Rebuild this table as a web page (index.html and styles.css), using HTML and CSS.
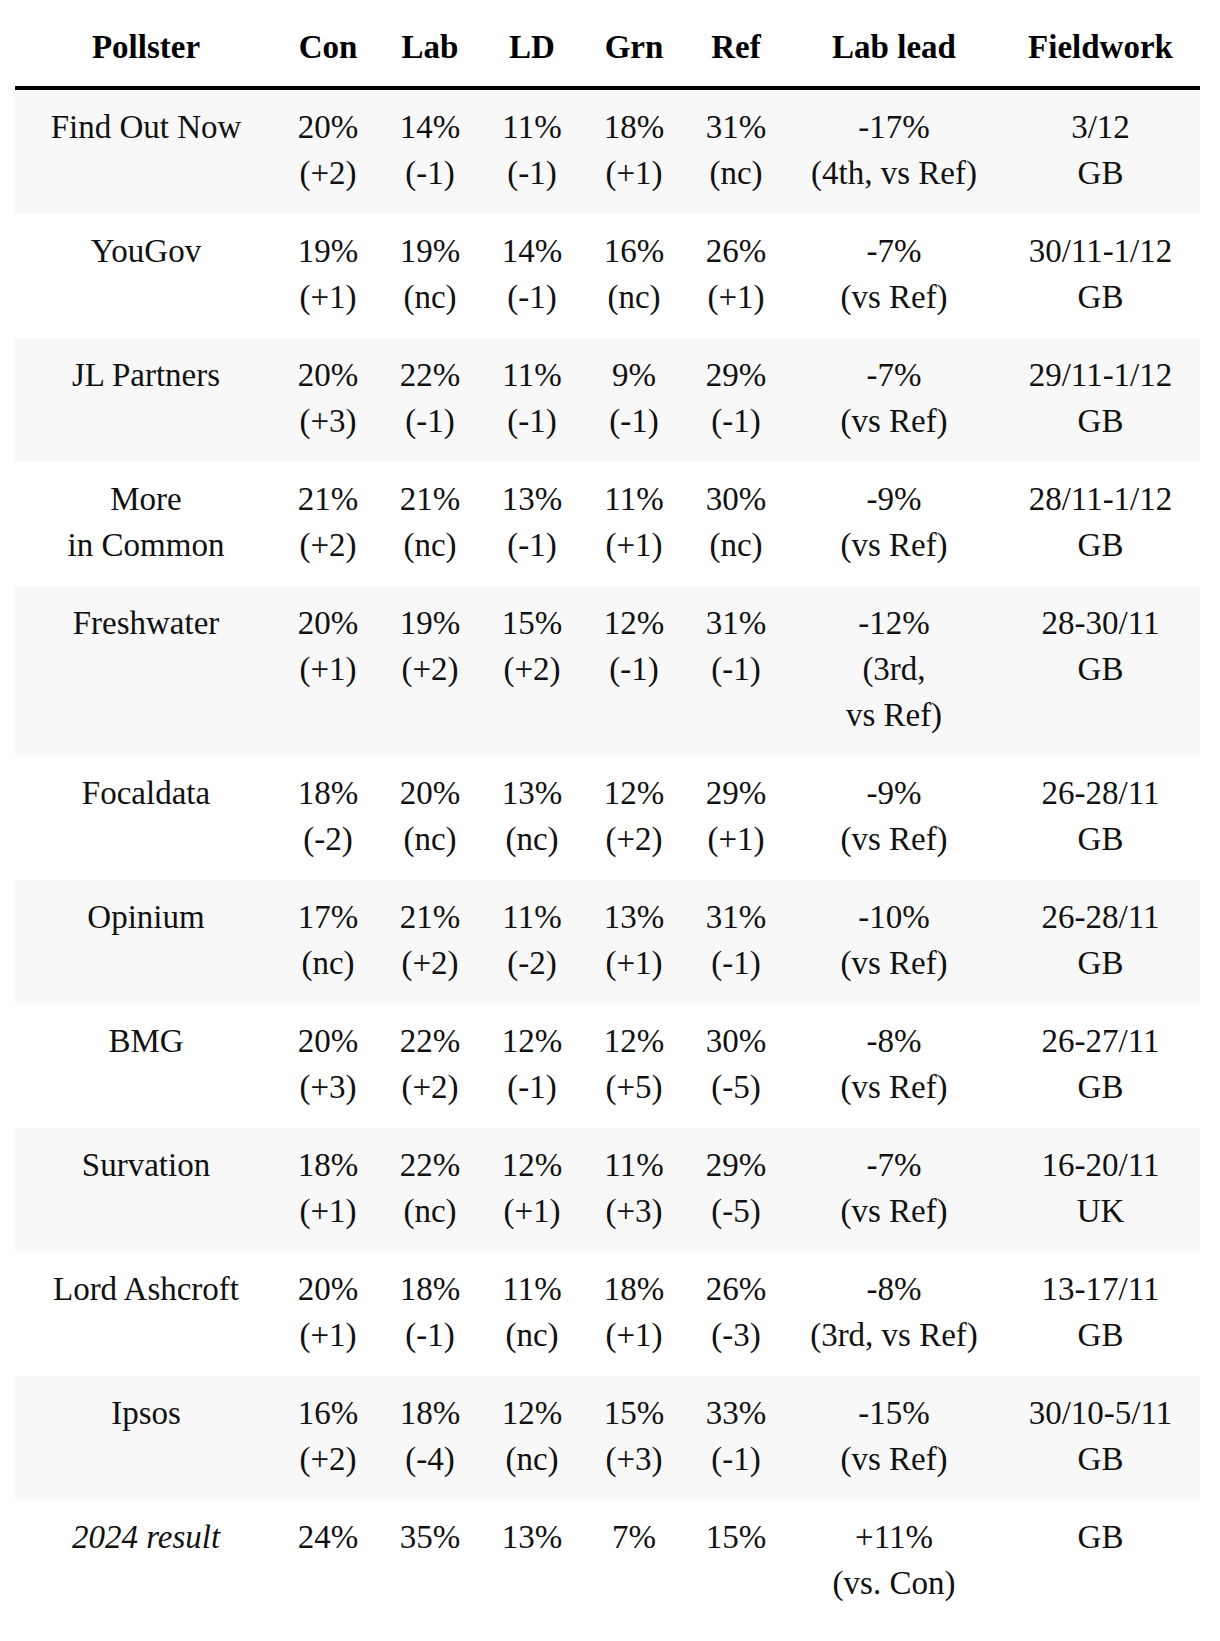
FILE: index.html
```html
<!DOCTYPE html>
<html lang="en">
<head>
<meta charset="utf-8">
<title>Polls</title>
<link rel="stylesheet" href="styles.css">
</head>
<body>
<div class="wrap">
<table class="polls">
<colgroup>
<col class="c-poll"><col class="c-num"><col class="c-num"><col class="c-num"><col class="c-num"><col class="c-num"><col class="c-lead"><col class="c-field">
</colgroup>
<thead>
<tr><th>Pollster</th><th>Con</th><th>Lab</th><th>LD</th><th>Grn</th><th>Ref</th><th>Lab lead</th><th>Fieldwork</th></tr>
</thead>
<tbody>
<tr><td>Find Out Now</td><td>20%<br>(+2)</td><td>14%<br>(-1)</td><td>11%<br>(-1)</td><td>18%<br>(+1)</td><td>31%<br>(nc)</td><td>-17%<br>(4th, vs Ref)</td><td>3/12<br>GB</td></tr>
<tr><td>YouGov</td><td>19%<br>(+1)</td><td>19%<br>(nc)</td><td>14%<br>(-1)</td><td>16%<br>(nc)</td><td>26%<br>(+1)</td><td>-7%<br>(vs Ref)</td><td>30/11-1/12<br>GB</td></tr>
<tr><td>JL Partners</td><td>20%<br>(+3)</td><td>22%<br>(-1)</td><td>11%<br>(-1)</td><td>9%<br>(-1)</td><td>29%<br>(-1)</td><td>-7%<br>(vs Ref)</td><td>29/11-1/12<br>GB</td></tr>
<tr><td>More<br>in Common</td><td>21%<br>(+2)</td><td>21%<br>(nc)</td><td>13%<br>(-1)</td><td>11%<br>(+1)</td><td>30%<br>(nc)</td><td>-9%<br>(vs Ref)</td><td>28/11-1/12<br>GB</td></tr>
<tr><td>Freshwater</td><td>20%<br>(+1)</td><td>19%<br>(+2)</td><td>15%<br>(+2)</td><td>12%<br>(-1)</td><td>31%<br>(-1)</td><td>-12%<br>(3rd,<br>vs Ref)</td><td>28-30/11<br>GB</td></tr>
<tr><td>Focaldata</td><td>18%<br>(-2)</td><td>20%<br>(nc)</td><td>13%<br>(nc)</td><td>12%<br>(+2)</td><td>29%<br>(+1)</td><td>-9%<br>(vs Ref)</td><td>26-28/11<br>GB</td></tr>
<tr><td>Opinium</td><td>17%<br>(nc)</td><td>21%<br>(+2)</td><td>11%<br>(-2)</td><td>13%<br>(+1)</td><td>31%<br>(-1)</td><td>-10%<br>(vs Ref)</td><td>26-28/11<br>GB</td></tr>
<tr><td>BMG</td><td>20%<br>(+3)</td><td>22%<br>(+2)</td><td>12%<br>(-1)</td><td>12%<br>(+5)</td><td>30%<br>(-5)</td><td>-8%<br>(vs Ref)</td><td>26-27/11<br>GB</td></tr>
<tr><td>Survation</td><td>18%<br>(+1)</td><td>22%<br>(nc)</td><td>12%<br>(+1)</td><td>11%<br>(+3)</td><td>29%<br>(-5)</td><td>-7%<br>(vs Ref)</td><td>16-20/11<br>UK</td></tr>
<tr><td>Lord Ashcroft</td><td>20%<br>(+1)</td><td>18%<br>(-1)</td><td>11%<br>(nc)</td><td>18%<br>(+1)</td><td>26%<br>(-3)</td><td>-8%<br>(3rd, vs Ref)</td><td>13-17/11<br>GB</td></tr>
<tr><td>Ipsos</td><td>16%<br>(+2)</td><td>18%<br>(-4)</td><td>12%<br>(nc)</td><td>15%<br>(+3)</td><td>33%<br>(-1)</td><td>-15%<br>(vs Ref)</td><td>30/10-5/11<br>GB</td></tr>
<tr class="result"><td><em>2024 result</em></td><td>24%</td><td>35%</td><td>13%</td><td>7%</td><td>15%</td><td>+11%<br>(vs. Con)</td><td>GB</td></tr>
</tbody>
</table>
</div>
</body>
</html>
```

FILE: styles.css
```css
html, body {
  margin: 0;
  padding: 0;
  background: #ffffff;
}

.wrap {
  padding: 8px 0 0 15px;
}

.polls {
  width: 1185px;
  border-collapse: collapse;
  table-layout: fixed;
  font-family: "Liberation Serif", "Times New Roman", serif;
  font-size: 33px;
  line-height: 46px;
  color: #111111;
}

.c-poll { width: 262px; }
.c-num { width: 102px; }
.c-lead { width: 214px; }
.c-field { width: 199px; }

.polls th,
.polls td {
  text-align: center;
  vertical-align: top;
  padding: 14px 0 18px;
  white-space: nowrap;
}

.polls th {
  font-weight: bold;
  color: #000000;
  padding: 16px 0;
}

.polls thead tr {
  border-bottom: 4px solid #000000;
}

.polls tbody tr:nth-child(odd) {
  background: #f8f8f8;
}

.polls em {
  font-style: italic;
}
```
